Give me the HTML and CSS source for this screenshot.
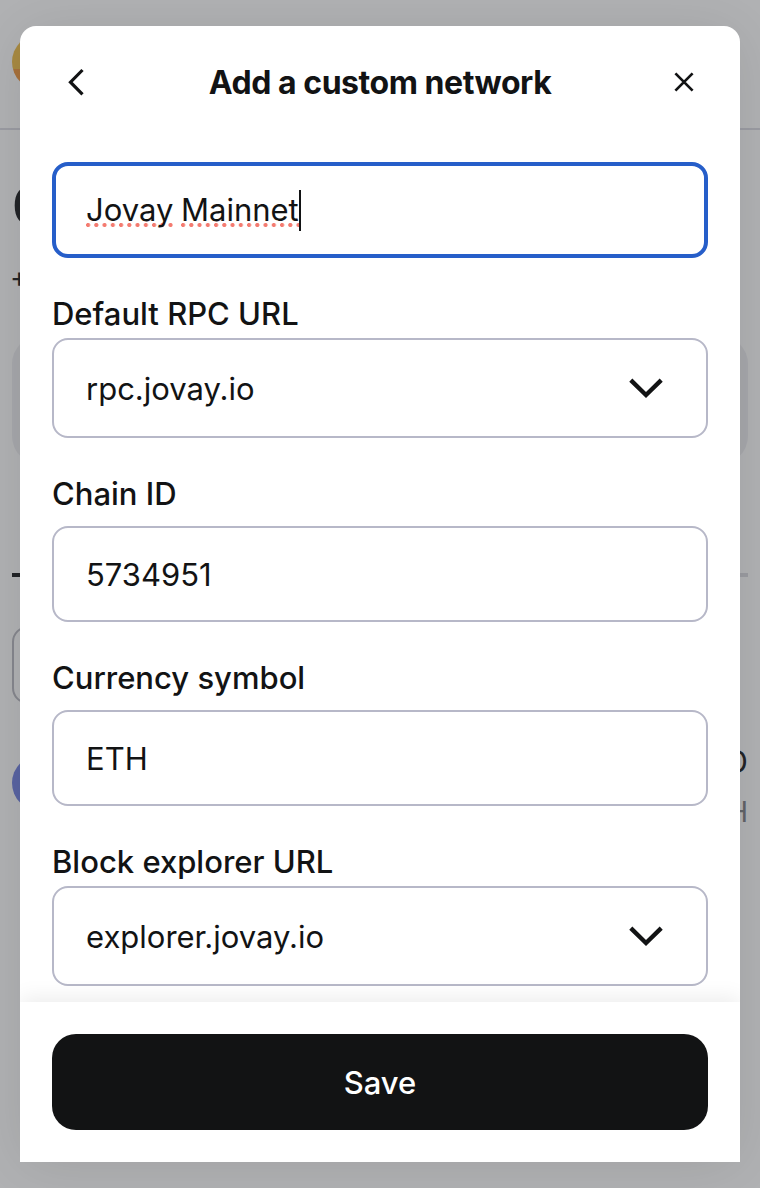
FILE: index.html
```html
<!DOCTYPE html>
<html lang="en">
<head>
<meta charset="utf-8">
<title>Add a custom network</title>
<link rel="stylesheet" href="styles.css">
</head>
<body>
<div class="wallet">
  <div class="wallet-bar"><span class="avatar"></span></div>
  <div class="balance">0</div>
  <div class="change">+</div>
  <div class="actions"></div>
  <div class="tabs"><span class="tab-active"></span></div>
  <div class="filter"></div>
  <div class="token">
    <span class="token-logo"></span>
    <div class="token-values"><span class="fiat">USD</span><span class="amount">ETH</span></div>
  </div>
</div>
<div class="overlay">
  <div class="modal" role="dialog">
    <header class="modal-header">
      <svg class="icon" viewBox="0 0 40 40"><path d="M26.5 8 14.5 20.2 26.5 32.4" fill="none" stroke="currentColor" stroke-width="3.2"/></svg>
      <h1 class="title">Add a custom network</h1>
      <svg class="icon" viewBox="0 0 40 40"><path d="M11.4 11.4 28.6 28.6M28.6 11.4 11.4 28.6" fill="none" stroke="currentColor" stroke-width="2.7"/></svg>
    </header>
    <main class="form">
      <div class="input focused"><span class="word word-a">Jovay</span><span class="word word-b">Mainnet</span><span class="caret"></span></div>
      <div class="field">
        <div class="label l-rpc">Default RPC URL</div>
        <div class="input select"><span class="t-rpc">rpc.jovay.io</span>
          <svg class="chevron" viewBox="0 0 40 40"><path d="M4.8 12.2 20 27 35.2 12.2" fill="none" stroke="currentColor" stroke-width="4.4"/></svg></div>
      </div>
      <div class="field spaced">
        <div class="label l-chain">Chain ID</div>
        <div class="input"><span class="t-chain">5734951</span></div>
      </div>
      <div class="field spaced">
        <div class="label l-symbol">Currency symbol</div>
        <div class="input"><span class="t-symbol">ETH</span></div>
      </div>
      <div class="field">
        <div class="label l-block">Block explorer URL</div>
        <div class="input select"><span class="t-block">explorer.jovay.io</span>
          <svg class="chevron" viewBox="0 0 40 40"><path d="M4.8 12.2 20 27 35.2 12.2" fill="none" stroke="currentColor" stroke-width="4.4"/></svg></div>
      </div>
    </main>
    <footer class="modal-footer"><button class="save">Save</button></footer>
  </div>
</div>
</body>
</html>
```

FILE: styles.css
```css
* { box-sizing: border-box; }
body {
  margin: 0;
  height: 1188px;
  overflow: hidden;
  background: #b1b2b4;
  color: #121314;
  font-family: Inter, "Liberation Sans", sans-serif;
  font-size: 31px;
}
.wallet { height: 1188px; color: #222427; }
.wallet-bar { height: 130px; padding: 34px 12px 0; border-bottom: 2px solid #9b9ca3; }
.avatar {
  display: block;
  width: 56px;
  height: 56px;
  border-radius: 50%;
  background: linear-gradient(#a88a42 0 62%, #a8713c 62%);
}
.balance { padding-left: 12px; height: 120px; line-height: 152px; font-size: 54px; font-weight: 600; }
.change { padding-left: 10px; height: 86px; line-height: 54px; font-size: 28px; }
.actions { height: 128px; margin: 0 12px; border-radius: 28px; background: #a7a8ac; }
.tabs { height: 4px; margin: 109px 12px 0; background: #9b9ca1; }
.tab-active { display: block; width: 120px; height: 4px; background: #222427; }
.filter { width: 240px; height: 78px; margin: 49px 12px 0; border: 2px solid #86878e; border-radius: 16px; }
.token { display: flex; justify-content: space-between; margin: 39px 12px 0; }
.token-logo { width: 56px; height: 56px; margin-top: 12px; border-radius: 50%; background: #5964a2; }
.token-values { display: flex; flex-direction: column; align-items: flex-end; line-height: 46px; }
.fiat { height: 46px; line-height: 38px; }
.amount { font-size: 28px; color: #626468; }

.overlay { position: absolute; inset: 0; padding: 26px 20px; overflow: hidden; }
.modal {
  display: flex;
  flex-direction: column;
  height: 1136px;
  background: #fff;
  border-radius: 16px 16px 0 0;
  box-shadow: 0 4px 60px rgba(0, 0, 0, .1);
}
.modal-header { display: flex; align-items: center; justify-content: space-between; height: 112px; padding: 0 36px; }
.icon { width: 40px; height: 40px; }
.title { margin: 0; font-size: 32px; font-weight: 700; letter-spacing: -.45px; white-space: nowrap; }
.form { display: flex; flex-direction: column; gap: 32px; height: 864px; padding: 24px 32px 16px; }
.label { height: 48px; line-height: 48px; font-weight: 500; white-space: nowrap; }
.input {
  display: flex;
  align-items: center;
  height: 96px;
  padding: 0 32px;
  border: 2px solid #b7b8c8;
  border-radius: 16px;
  white-space: nowrap;
}
.focused { border: 4px solid #265ec9; padding: 0 30px; }
.select { height: 100px; justify-content: space-between; padding-right: 40px; }
.spaced .input { margin-top: 8px; }
.chevron { width: 40px; height: 40px; }
.word {
  height: 40px;
  line-height: 40px;
  background: radial-gradient(circle at 2.1px 2px, #f47b70 1.7px, transparent 2.4px) 0 33px / 8.25px 4px repeat-x;
}
.word-a { width: 87px; margin-right: 8px; }
.word-b { width: 118px; }
.caret { width: 2px; height: 41px; background: #121314; }
.modal-footer { height: 160px; padding: 32px; background: #fff; box-shadow: 0 -4px 20px rgba(0, 0, 0, .08); clip-path: inset(-30px 0 0 0); }
.save {
  width: 100%;
  height: 96px;
  border: 0;
  border-radius: 24px;
  background: #121314;
  color: #fff;
  font: 500 31px Inter, sans-serif;
}
```
